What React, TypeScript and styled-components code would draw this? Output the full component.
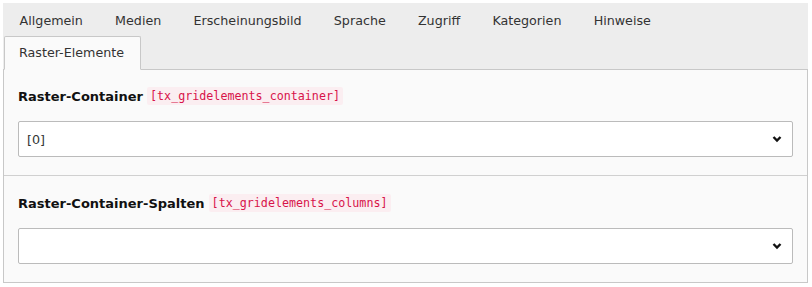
import styled, { createGlobalStyle } from "styled-components";

const GlobalStyle = createGlobalStyle`
  html, body {
    margin: 0;
    padding: 0;
    background: #ffffff;
  }
  body {
    font-family: "DejaVu Sans", Verdana, sans-serif;
    font-size: 12px;
    color: #333;
  }
`;

const Frame = styled.div`
  padding: 3px 4px 4px 3px;
`;

const TabBar = styled.ul`
  display: flex;
  flex-wrap: wrap;
  list-style: none;
  margin: 0;
  padding: 0;
  background: #ededed;
  border-bottom: 1px solid #c8c8c8;
`;

const TabBreak = styled.li`
  flex-basis: 100%;
  height: 0;
`;

const Tab = styled.li<{ active?: boolean }>`
  margin: 0 0 -1px 1px;
  padding: 0 ${(p) => (p.active ? "16px 0 14px" : "14.6px")};
  height: 34px;
  line-height: ${(p) => (p.active ? "31px" : "33px")};
  border: 1px solid ${(p) => (p.active ? "#c8c8c8" : "transparent")};
  border-bottom-color: ${(p) => (p.active ? "#fafafa" : "transparent")};
  border-radius: 2px 2px 0 0;
  background: ${(p) => (p.active ? "#fafafa" : "transparent")};
  color: #333;
  font-size: 12.7px;
  white-space: nowrap;
  box-sizing: border-box;
`;

const Panel = styled.div`
  background: #fafafa;
  border: 1px solid #c8c8c8;
  border-top: none;
`;

const Section = styled.div`
  padding: 16px 14px 18px 14px;
  & + & {
    border-top: 1px solid #d0d0d0;
    padding-top: 17px;
  }
`;

const Label = styled.div`
  display: flex;
  align-items: center;
  gap: 4px;
  height: 20px;
  margin-bottom: 15px;
  font-weight: bold;
  font-size: 13px;
  color: #111;
`;

const Code = styled.code`
  font-family: "DejaVu Sans Mono", "Liberation Mono", monospace;
  font-weight: normal;
  font-size: 11.7px;
  color: #d8134a;
  background: #fbeef1;
  padding: 2px 3px;
  border-radius: 2px;
`;

const Select = styled.div`
  display: flex;
  align-items: center;
  justify-content: space-between;
  height: 36px;
  box-sizing: border-box;
  padding: 0 10px 0 8px;
  background: #fff;
  border: 1px solid #bbbbbb;
  border-radius: 2px;
  font-size: 12.7px;
  color: #333;
`;

function Chevron() {
  return (
    <svg width="10" height="8" viewBox="0 0 10 8">
      <polyline points="1.5,2 5,5.5 8.5,2" fill="none" stroke="#111" strokeWidth="2.4" />
    </svg>
  );
}

const tabs = ["Allgemein", "Medien", "Erscheinungsbild", "Sprache", "Zugriff", "Kategorien", "Hinweise"];

export default function App() {
  return (
    <>
      <GlobalStyle />
      <Frame>
        <TabBar>
          {tabs.map((t) => (
            <Tab key={t}>{t}</Tab>
          ))}
          <TabBreak />
          <Tab active>Raster-Elemente</Tab>
        </TabBar>
        <Panel>
          <Section>
            <Label>
              Raster-Container <Code>[tx_gridelements_container]</Code>
            </Label>
            <Select>
              <span>[0]</span>
              <Chevron />
            </Select>
          </Section>
          <Section>
            <Label>
              Raster-Container-Spalten <Code>[tx_gridelements_columns]</Code>
            </Label>
            <Select>
              <span></span>
              <Chevron />
            </Select>
          </Section>
        </Panel>
      </Frame>
    </>
  );
}
